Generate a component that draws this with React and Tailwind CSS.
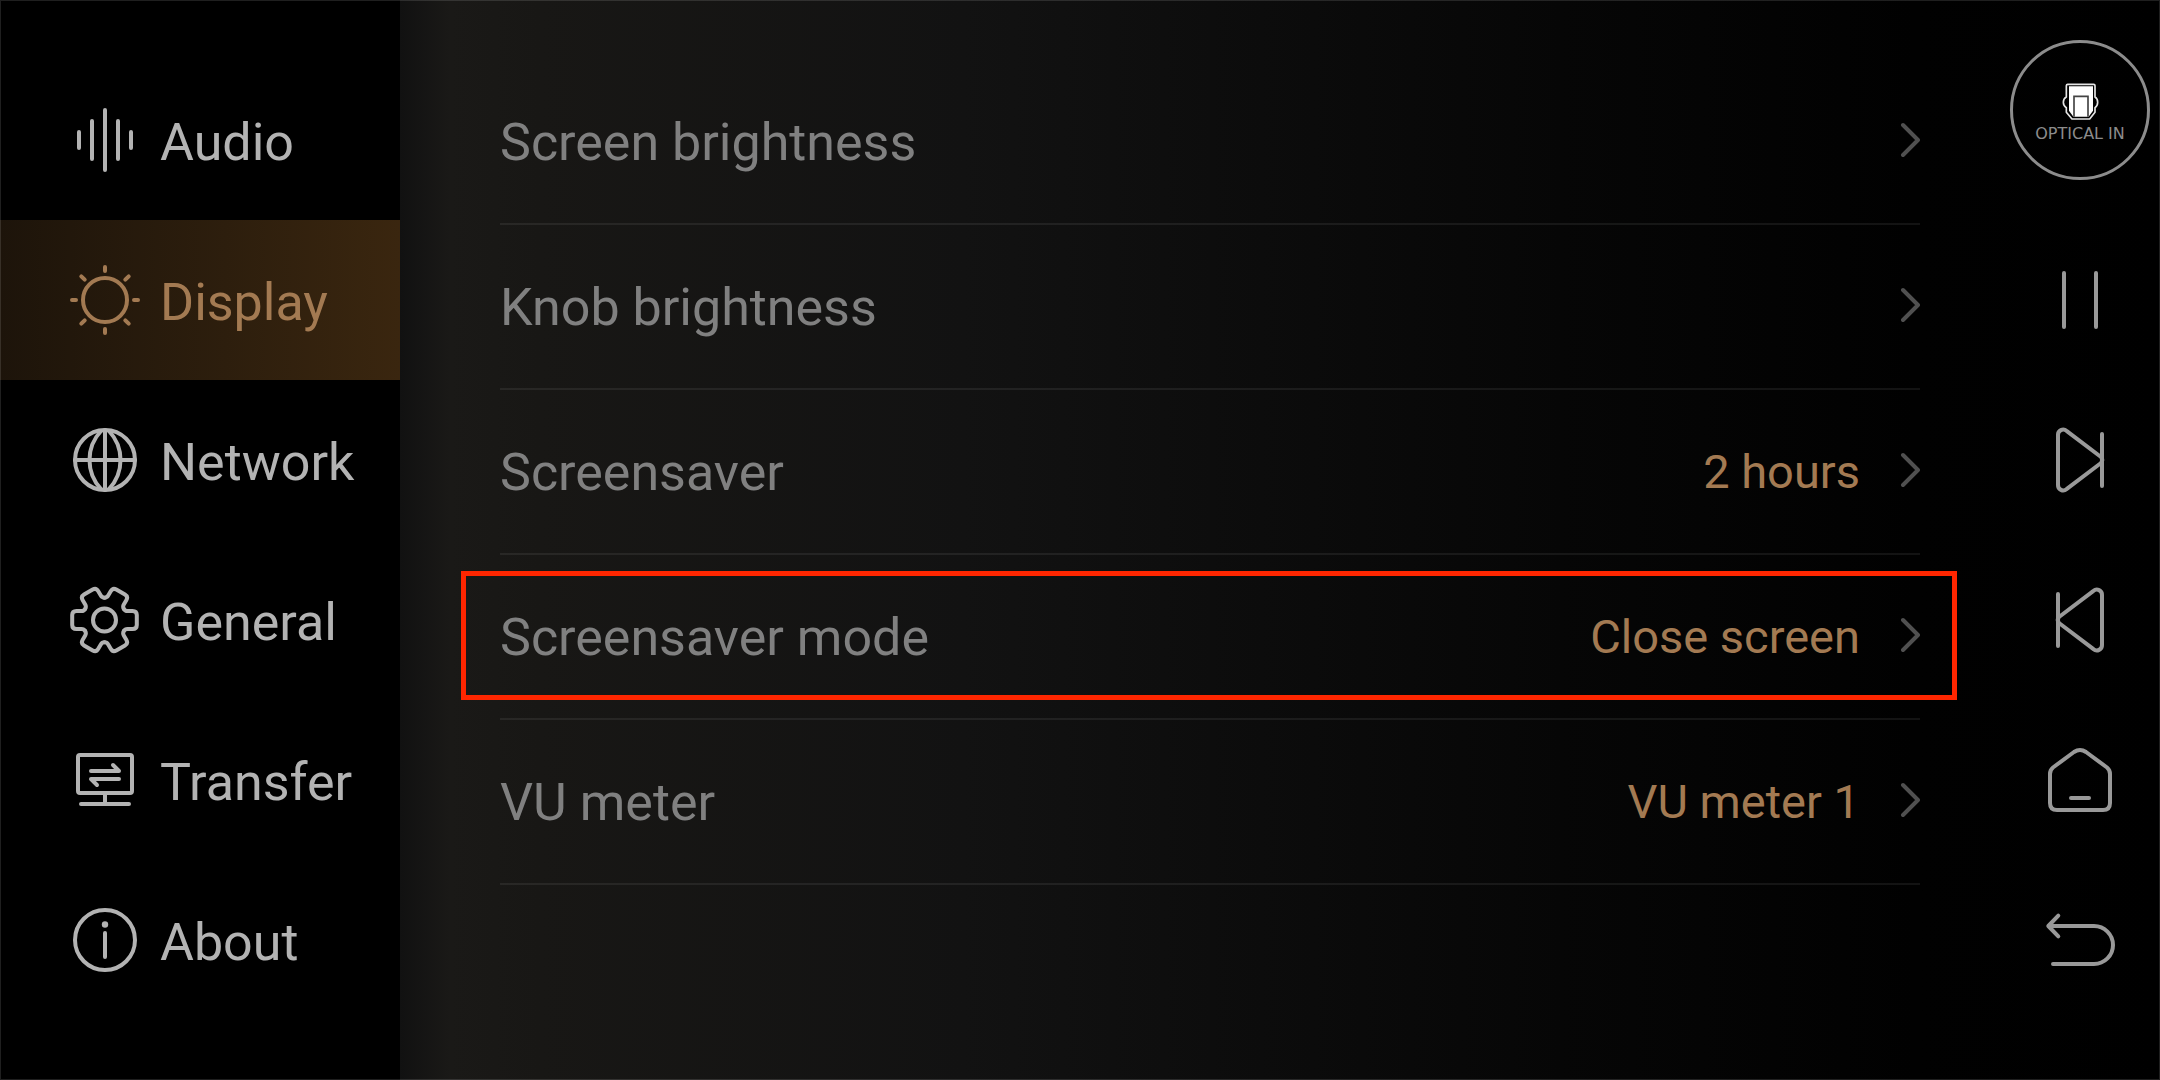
import React, { useState } from "react";

function Icon({ children, className = "" }) {
  return (
    <svg viewBox="0 0 70 70" fill="none" stroke="currentColor" strokeWidth="4"
      strokeLinecap="round" strokeLinejoin="round" aria-hidden="true"
      className={`w-[70px] h-[70px] shrink-0 ${className}`}>
      {children}
    </svg>
  );
}

const AudioIcon = () => (
  <Icon>
    <path d="M9 27V43M22 16V54M35 5V65M48 16V54M61 27V43" />
  </Icon>
);

const DisplayIcon = () => (
  <Icon>
    <circle cx="35" cy="35" r="22" />
    <path d="M35 2V6M35 64V68M2 35H6M64 35H68M11.3 11.3L14.7 14.7M58.7 11.3L55.3 14.7M11.3 58.7L14.7 55.3M58.7 58.7L55.3 55.3" />
  </Icon>
);

const NetworkIcon = () => (
  <Icon>
    <circle cx="35" cy="35" r="30" />
    <path d="M35 5V65M5 35H65M31 6A42.3 42.3 0 0 0 31 64M39 6A42.3 42.3 0 0 1 39 64" />
  </Icon>
);

// one tooth, repeated around the centre
const GearIcon = () => (
  <Icon>
    <g transform="translate(34.5 35)">
      <circle r="11.5" />
      {[0, 60, 120, 180, 240, 300].map((deg) => (
        <path key={deg} transform={`rotate(${deg})`}
          d="M19.3 -11.1Q20.5 -9 23 -9H28Q32.3 -9 32.3 -5V5Q32.3 9 28 9H23Q20.5 9 19.3 11.1" />
      ))}
    </g>
  </Icon>
);

const TransferIcon = () => (
  <Icon>
    <rect x="8" y="10" width="54" height="38" rx="2" />
    <path d="M35 48V58M11 59H59M21 26H49L43 20M49 34H21L27 40" />
  </Icon>
);

const AboutIcon = () => (
  <Icon>
    <circle cx="35" cy="35" r="30" />
    <circle cx="35" cy="19.5" r="3.2" fill="currentColor" stroke="none" />
    <path d="M35 28V52" />
  </Icon>
);

const PauseIcon = () => (
  <Icon>
    <path d="M19 8V62M51 8V62" />
  </Icon>
);

const SKIP_PATH =
  "M57 9V61M13 10a5.2 5.2 0 0 1 8.5 -4.2L56 32q2.5 3 0 6L21.5 64.2A5.2 5.2 0 0 1 13 60Z";

const NextIcon = () => (
  <Icon>
    <path d={SKIP_PATH} />
  </Icon>
);

const PrevIcon = () => (
  <Icon>
    <path d={SKIP_PATH} transform="matrix(-1 0 0 1 70 0)" />
  </Icon>
);

const HomeIcon = () => (
  <Icon>
    <path d="M5 29Q5 25 8 22.5L29 7Q35 3 41 7L62 22.5Q65 25 65 29V58Q65 65 58 65H12Q5 65 5 58Z" />
    <path d="M26 53H44" />
  </Icon>
);

const BackIcon = () => (
  <Icon className="overflow-visible">
    <path d="M13.3 10.7L3.3 21L13.3 31.3M4 21H49A19 19 0 0 1 49 59H8" />
  </Icon>
);

function Chevron() {
  return (
    <svg viewBox="0 0 20 36" fill="none" stroke="currentColor" strokeWidth="4"
      strokeLinecap="round" strokeLinejoin="round" aria-hidden="true"
      className="w-5 h-9 shrink-0 text-[#505050]">
      <path d="M3 3L18 18L3 33" />
    </svg>
  );
}

function OpticalPort() {
  return (
    <svg viewBox="0 0 120 120" fill="none" strokeLinejoin="round" aria-hidden="true" className="w-10 h-10">
      <path d="M23 7H101Q105 7 105 11V45Q113 50 113 61Q113 72 105 77V91L89 111H36L19 91V77Q10 72 10 61Q10 50 19 45V11Q19 7 23 7Z"
        stroke="#e6e6e6" strokeWidth="5" />
      <path d="M27 13H99V86L86 104H40L27 86Z" fill="#ffffff" />
      <path d="M42 104V43H84V104" stroke="#444444" strokeWidth="5" strokeLinejoin="miter" />
    </svg>
  );
}

const menu = [
  { label: "Audio", icon: AudioIcon },
  { label: "Display", icon: DisplayIcon },
  { label: "Network", icon: NetworkIcon },
  { label: "General", icon: GearIcon },
  { label: "Transfer", icon: TransferIcon },
  { label: "About", icon: AboutIcon },
];

const settings = [
  { label: "Screen brightness" },
  { label: "Knob brightness" },
  { label: "Screensaver", value: "2 hours" },
  { label: "Screensaver mode", value: "Close screen", highlighted: true },
  { label: "VU meter", value: "VU meter 1" },
];

const controls = [
  { label: "Pause", icon: PauseIcon },
  { label: "Next", icon: NextIcon },
  { label: "Previous", icon: PrevIcon },
  { label: "Home", icon: HomeIcon },
  { label: "Back", icon: BackIcon },
];

function Sidebar({ active, onSelect }) {
  return (
    <nav className="w-[400px] shrink-0 bg-black py-15">
      {menu.map(({ label, icon: ItemIcon }) => (
        <button key={label} type="button" onClick={() => onSelect(label)}
          className={`flex items-center gap-5 w-full h-40 pl-[70px] text-[52px] leading-[60px]
                      ${active === label
                        ? "bg-linear-to-r from-[#1d140a] to-[#3a260f] text-[#a37a52]"
                        : "text-[#b3b3b3]"
                      }`}>
          <ItemIcon />
          <span className="pt-[6px]">{label}</span>
        </button>
      ))}
    </nav>
  );
}

function SettingRow({ label, value, highlighted }) {
  return (
    <li className="relative border-b-2 border-white/7 pb-[3px]">
      <button type="button" className="flex items-center w-full h-40 text-left">
        <span className="flex-1 pt-[6px] text-[52px] leading-[60px] text-[#808080]">{label}</span>
        {value && <span className="pt-1 pr-10 text-[47px] leading-[56px] text-[#a37a52]">{value}</span>}
        <Chevron />
      </button>
      {highlighted && (
        <div className="absolute top-4 bottom-[18px] -left-[39px] -right-[37px] border-[5px] border-[#ff2600] pointer-events-none" />
      )}
    </li>
  );
}

function App() {
  const [active, setActive] = useState("Display");

  return (
    <div className="relative flex min-h-screen bg-black font-[Roboto,sans-serif]">
      <Sidebar active={active} onSelect={setActive} />

      <div className="flex flex-1 bg-[linear-gradient(to_right,#111111_0px,#1a1917_50px,#181715_140px,#121212_32%,#060606_66%,#010101_86%,#000000_100%)]">
        <main className="flex-1 pl-[100px] pr-20 py-15">
          <ul>
            {settings.map((row) => (
              <SettingRow key={row.label} {...row} />
            ))}
          </ul>
        </main>

        <aside className="flex flex-col items-center gap-10 w-40 shrink-0 pt-10 text-[#999999]">
          <button type="button"
            className="flex flex-col items-center justify-center gap-1 w-[140px] h-[140px] pt-1 rounded-full border-[3px] border-[#8c8c8c]">
            <OpticalPort />
            <span className="font-['DejaVu_Sans',sans-serif] text-[16px] leading-4 text-[#8c8c8c] whitespace-nowrap">OPTICAL IN</span>
          </button>
          <div className="w-full">
            {controls.map(({ label, icon: ControlIcon }) => (
              <button key={label} type="button" aria-label={label}
                className="flex items-center justify-center w-full h-40">
                <ControlIcon />
              </button>
            ))}
          </div>
        </aside>
      </div>

      {/* bezel edge */}
      <div className="absolute inset-0 border border-white/12 pointer-events-none" />
    </div>
  );
}

export default App;
